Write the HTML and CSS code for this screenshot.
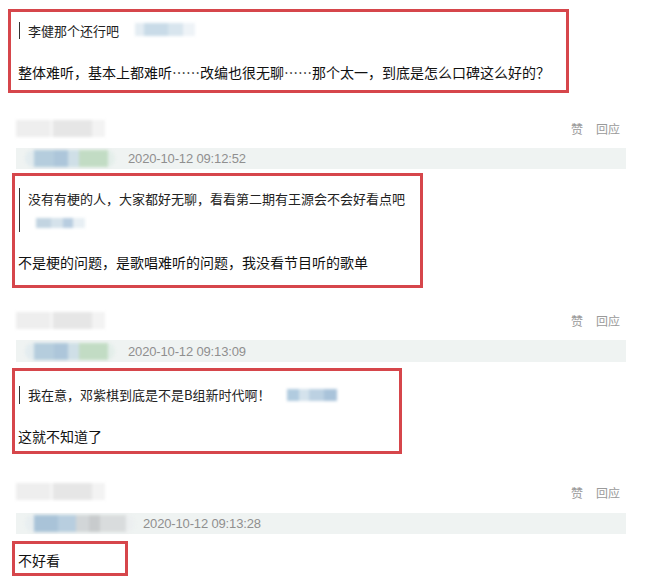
FILE: index.html
```html
<!DOCTYPE html>
<html lang="zh-CN">
<head>
<meta charset="utf-8">
<title>评论</title>
<link rel="stylesheet" href="styles.css">
</head>
<body>
<div class="page">
  <div class="box box-1">
    <div class="quote quote-1">李健那个还行吧<span class="blob blob-q1"></span></div>
    <div class="reply reply-1">整体难听，基本上都难听……改编也很无聊……那个太一，到底是怎么口碑这么好的？</div>
  </div>

  <div class="comment c2">
    <div class="c-head"><span class="blob name-blob"></span><span class="actions"><span>赞</span><span>回应</span></span></div>
    <div class="c-meta"><span class="blob meta-blob meta-blob-a"></span><span class="time">2020-10-12 09:12:52</span></div>
  </div>
  <div class="box box-2">
    <div class="quote quote-2">
      <div class="quote-line">没有有梗的人，大家都好无聊，看看第二期有王源会不会好看点吧</div>
      <div class="blob blob-q2"></div>
    </div>
    <div class="reply reply-2">不是梗的问题，是歌唱难听的问题，我没看节目听的歌单</div>
  </div>

  <div class="comment c3">
    <div class="c-head"><span class="blob name-blob"></span><span class="actions"><span>赞</span><span>回应</span></span></div>
    <div class="c-meta"><span class="blob meta-blob meta-blob-a"></span><span class="time">2020-10-12 09:13:09</span></div>
  </div>
  <div class="box box-3">
    <div class="quote quote-3">我在意，邓紫棋到底是不是B组新时代啊！<span class="blob blob-q3"></span></div>
    <div class="reply reply-3">这就不知道了</div>
  </div>

  <div class="comment c4">
    <div class="c-head"><span class="blob name-blob"></span><span class="actions"><span>赞</span><span>回应</span></span></div>
    <div class="c-meta"><span class="blob meta-blob meta-blob-b"></span><span class="time time-b">2020-10-12 09:13:28</span></div>
  </div>
  <div class="box box-4">
    <div class="reply reply-4">不好看</div>
  </div>
</div>
</body>
</html>
```

FILE: styles.css
```css
* { box-sizing: border-box; }
html, body { margin: 0; padding: 0; background: #fff; }
body {
  font-family: "Noto Sans CJK SC", "Liberation Sans", sans-serif;
  color: #111;
  width: 668px;
  height: 585px;
  overflow: hidden;
}
.page {
  padding-top: 9px;
  display: flex;
  flex-direction: column;
  align-items: flex-start;
}

/* red annotation boxes */
.box {
  border: 3px solid #d6464b;
  display: flex;
  flex-direction: column;
  align-items: flex-start;
}
.box-1 { margin-left: 8px; width: 561px; padding: 10px 0 8px 7px; }
.box-2 { margin-left: 12px; margin-top: 4px; width: 411px; padding: 12px 0 13px 3px; }
.box-3 { margin-left: 12px; margin-top: 6px; width: 390px; padding: 15px 0 5px 3px; }
.box-4 { margin-left: 12px; margin-top: 7px; width: 116px; padding: 6px 0 3px 3px; }

.quote {
  margin-left: 1px;
  border-left: 1px solid #333;
  padding-left: 8px;
  font-size: 13px;
  color: #222;
  display: flex;
  align-items: flex-start;
  white-space: nowrap;
}
.quote-1 { line-height: 17px; }
.quote-2 { flex-direction: column; padding-top: 2px; line-height: 18px; padding-bottom: 4px; }
.quote-3 { line-height: 18px; }

.reply {
  font-size: 14px;
  line-height: 20px;
  color: #111;
  white-space: nowrap;
}
.reply-1 { margin-top: 23px; }
.reply-2 { margin-top: 20px; }
.reply-3 { margin-top: 22px; }

/* blurred (pixelated) user data */
.blob { display: block; filter: blur(1.8px); flex: none; }
.blob-q1 {
  width: 60px; height: 13px; margin-left: 16px; margin-top: 1px;
  background: linear-gradient(90deg, #e4edf3 0 15%, #c9dbe8 15% 55%, #d8e5ee 55% 80%, #eef3f7 80%);
}
.blob-q2 {
  width: 49px; height: 10px; margin-left: 8px; margin-top: 10px;
  background: linear-gradient(90deg, #c2d4e1 0 30%, #d5e2eb 30% 55%, #b8cde0 55% 75%, #e8eff4 75%);
}
.blob-q3 {
  width: 50px; height: 12px; margin-left: 16px; margin-top: 3px;
  background: linear-gradient(90deg, #b1cbdf 0 25%, #d4e2ec 25% 45%, #bcd1e2 45% 75%, #a9c3da 75%);
}

/* comment header rows */
.comment { margin-left: 16px; width: 610px; display: flex; flex-direction: column; }
.c2 { margin-top: 27px; }
.c3 { margin-top: 24px; }
.c4 { margin-top: 29px; }
.c-head {
  height: 28px;
  display: flex;
  justify-content: space-between;
  align-items: flex-start;
  padding-right: 6px;
}
.c4 .c-head { height: 30px; }
.name-blob {
  width: 89px; height: 17px;
  background: linear-gradient(90deg, #eeeeee 0 38%, #f6f6f6 38% 42%, #e6e6e6 42% 85%, #f3f3f3 85%);
}
.actions {
  display: flex;
  gap: 13px;
  font-size: 12px;
  line-height: 18px;
  color: #9a9a9a;
}
.c4 .actions { margin-top: 1px; }

.c-meta {
  height: 21px;
  background: #eff3f2;
  display: flex;
  align-items: center;
}
.c3 .c-meta { height: 22px; }
.meta-blob { height: 17px; margin-left: 9px; border-radius: 8px; }
.meta-blob-a {
  width: 90px;
  background: linear-gradient(90deg, #e3ecef 0 10%, #b5cddd 10% 32%, #adc6da 32% 48%, #cfdfe7 48% 60%, #c2dcc4 60% 92%, #e4eeea 92%);
}
.meta-blob-b {
  width: 110px;
  background: linear-gradient(90deg, #e8eef0 0 8%, #a9c3d8 8% 30%, #b8cedf 30% 46%, #d2d6d8 46% 58%, #c8cbcd 58% 68%, #d9dcdd 68% 92%, #eceff0 92%);
}
.time {
  margin-left: 13px;
  font-family: "Liberation Sans", Arial, sans-serif;
  font-size: 13px;
  color: #8f8f8f;
  letter-spacing: -0.15px;
}
.time-b { margin-left: 8px; }
```
